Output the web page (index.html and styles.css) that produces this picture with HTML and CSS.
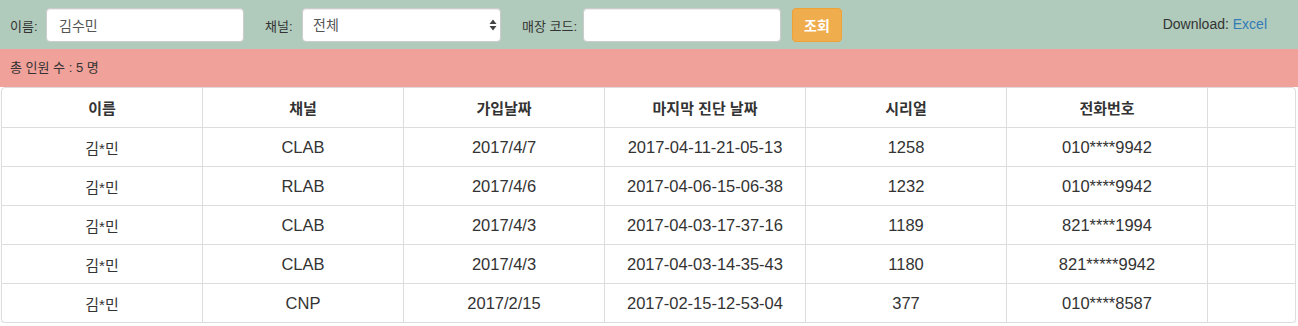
FILE: index.html
```html
<!DOCTYPE html>
<html lang="ko">
<head>
  <meta charset="UTF-8">
  <meta name="viewport" content="width=device-width, initial-scale=1.0">
  <title>회원 조회</title>
  <link rel="stylesheet" href="styles.css">
</head>
<body>
  <form class="search-bar">
    <div class="field field-name">
      <label for="name">이름:</label>
      <input type="text" id="name" value="김수민">
    </div>
    <div class="field field-channel">
      <label for="channel">채널:</label>
      <div class="select-wrap">
        <select id="channel">
          <option>전체</option>
          <option>CLAB</option>
          <option>RLAB</option>
          <option>CNP</option>
        </select>
        <svg class="select-arrows" width="8" height="12" viewBox="0 0 8 12">
          <path d="M4 0.5 L7.5 5 L0.5 5 Z M4 11.5 L7.5 7 L0.5 7 Z" fill="#444"/>
        </svg>
      </div>
    </div>
    <div class="field field-store">
      <label for="store-code">매장 코드:</label>
      <input type="text" id="store-code">
    </div>
    <button type="button" class="btn-search">조회</button>
    <div class="download">Download: <a href="#">Excel</a></div>
  </form>

  <div class="summary">총 인원 수 : 5 명</div>

  <div class="panel">
    <table class="members">
      <thead>
        <tr>
          <th class="col-first">이름</th>
          <th>채널</th>
          <th>가입날짜</th>
          <th>마지막 진단 날짜</th>
          <th>시리얼</th>
          <th>전화번호</th>
          <th class="col-last"></th>
        </tr>
      </thead>
      <tbody>
        <tr>
          <td class="name">김*민</td><td>CLAB</td><td>2017/4/7</td><td>2017-04-11-21-05-13</td><td>1258</td><td>010****9942</td><td></td>
        </tr>
        <tr>
          <td class="name">김*민</td><td>RLAB</td><td>2017/4/6</td><td>2017-04-06-15-06-38</td><td>1232</td><td>010****9942</td><td></td>
        </tr>
        <tr>
          <td class="name">김*민</td><td>CLAB</td><td>2017/4/3</td><td>2017-04-03-17-37-16</td><td>1189</td><td>821****1994</td><td></td>
        </tr>
        <tr>
          <td class="name">김*민</td><td>CLAB</td><td>2017/4/3</td><td>2017-04-03-14-35-43</td><td>1180</td><td>821*****9942</td><td></td>
        </tr>
        <tr>
          <td class="name">김*민</td><td>CNP</td><td>2017/2/15</td><td>2017-02-15-12-53-04</td><td>377</td><td>010****8587</td><td></td>
        </tr>
      </tbody>
    </table>
  </div>
</body>
</html>
```

FILE: styles.css
```css
* {
  box-sizing: border-box;
}
body {
  margin: 0;
  font-family: "Liberation Sans", "Noto Sans CJK KR", Arial, sans-serif;
  font-size: 14px;
  color: #333;
  background-color: #fff;
}
.search-bar {
  display: flex;
  align-items: center;
  height: 49px;
  padding: 1px 31px 0 10px;
  margin: 0;
  background-color: #b0cabb;
}
.field {
  display: flex;
  align-items: center;
}
.field label {
  font-size: 13px;
  white-space: nowrap;
}
.field-name label {
  width: 36px;
}
.field-channel {
  margin-left: 21px;
}
.field-channel label {
  width: 37px;
}
.field-store {
  margin-left: 21px;
}
.field-store label {
  width: 61px;
}
.field input,
.field select {
  height: 34px;
  padding: 6px 12px;
  font-family: inherit;
  font-size: 14px;
  color: #555;
  background-color: #fff;
  border: 1px solid #ccc;
  border-radius: 4px;
  box-shadow: inset 0 1px 1px rgba(0, 0, 0, .075);
  outline: none;
}
.field input {
  width: 198px;
}
.select-wrap {
  position: relative;
}
.field select {
  width: 199px;
  padding: 6px 10px;
  appearance: none;
  -webkit-appearance: none;
}
.select-arrows {
  position: absolute;
  right: 4px;
  top: 11px;
  pointer-events: none;
}
.btn-search {
  margin-left: 11px;
  width: 50px;
  height: 34px;
  padding: 0;
  font-family: inherit;
  font-size: 14px;
  font-weight: bold;
  color: #fff;
  background-color: #f0ad4e;
  border: 1px solid #eea236;
  border-radius: 4px;
  cursor: pointer;
}
.download {
  margin-left: auto;
  margin-bottom: 2px;
}
.download a {
  color: #337ab7;
  text-decoration: none;
}
.summary {
  height: 38px;
  line-height: 38px;
  padding-left: 10px;
  font-size: 13px;
  background-color: #f0a199;
}
.panel {
  width: 1295px;
  margin-left: 1px;
  border: 1px solid #ddd;
  border-radius: 4px;
  overflow: hidden;
  box-shadow: 0 1px 1px rgba(0, 0, 0, .12);
}
.members {
  width: 100%;
  border-collapse: separate;
  border-spacing: 0;
  table-layout: fixed;
  font-size: 15px;
}
.members th,
.members td {
  height: 39px;
  padding: 0 8px;
  text-align: center;
  vertical-align: middle;
  border-left: 1px solid #ddd;
  white-space: nowrap;
}
.members th {
  width: 201px;
  font-weight: bold;
}
.members th.col-first {
  width: 200px;
}
.members th.col-last {
  width: auto;
}
.members th:first-child,
.members td:first-child {
  border-left: none;
}
.members td {
  border-top: 1px solid #ddd;
  font-size: 16.5px;
}
.members td.name {
  font-size: 15px;
}
```
